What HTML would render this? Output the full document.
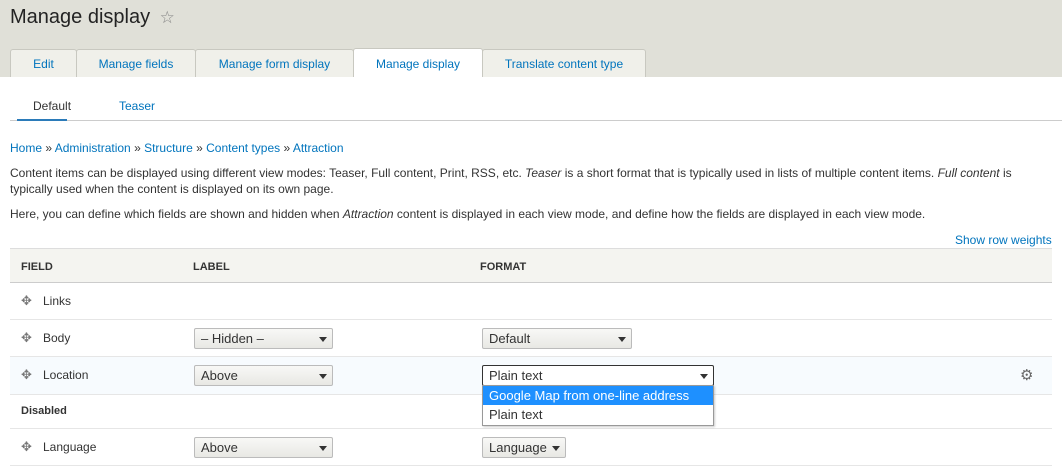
<!DOCTYPE html>
<html><head><style>
*{box-sizing:border-box;margin:0;padding:0}
body{width:1062px;height:475px;overflow:hidden;background:#fff;font-family:"Liberation Sans",sans-serif;font-size:12px;color:#333;position:relative}
a{color:#0074bd;text-decoration:none}
.hdr{position:absolute;left:0;top:0;width:1062px;height:77px;background:#e0e0d8}
.title{position:absolute;left:10px;top:6px;font-size:20px;color:#232323}
.star{color:#888;font-size:17px;margin-left:4px}
.tab{position:absolute;top:49px;height:28px;border:1px solid #c8c8c0;border-bottom:none;background:#f0f0ea;color:#0074bd;font-size:12px;line-height:28px;text-align:center;border-radius:3px 3px 0 0}
.tab.act{background:#fff;height:29px;top:48px;line-height:30px}
.sub{position:absolute;top:99px;font-size:12px;color:#0074bd}
.line{position:absolute;left:10px;width:1052px;top:120px;height:1px;background:#ccc}
.ul{position:absolute;left:17px;width:50px;top:119px;height:2px;background:#2b7bb9}
.t{position:absolute;left:10px;font-size:12px;white-space:nowrap}
.row{position:absolute;left:10px;width:1042px;border-bottom:1px solid #e6e6e6}
.th{background:#f4f4f0;border-top:1px solid #ddd;border-bottom:1px solid #ccc;font-weight:bold;font-size:11px}
.cell{position:absolute;white-space:nowrap}
.drag{position:absolute;left:11px;color:#777;font-size:13px}
.sel{position:absolute;height:21px;border:1px solid #bbb;border-radius:2px;background:linear-gradient(#f8f8f6,#e8e8e4);font-size:13px;line-height:19px;padding-left:6px}
.sel:after{content:"";position:absolute;right:5px;top:8px;border-left:4px solid transparent;border-right:4px solid transparent;border-top:5px solid #333}
</style></head><body>
<div class="hdr">
<div class="title">Manage display <span class="star">☆</span></div>
<div class="tab" style="left:10px;width:67px">Edit</div>
<div class="tab" style="left:76px;width:120px">Manage fields</div>
<div class="tab" style="left:195px;width:159px">Manage form display</div>
<div class="tab act" style="left:353px;width:130px">Manage display</div>
<div class="tab" style="left:482px;width:164px">Translate content type</div>
</div>
<div class="sub" style="left:33px;color:#333">Default</div>
<div class="sub" style="left:119px">Teaser</div>
<div class="line"></div><div class="ul"></div>
<div class="t" style="top:141px"><a>Home</a> » <a>Administration</a> » <a>Structure</a> » <a>Content types</a> » <a>Attraction</a></div>
<div class="t" style="top:165px;line-height:16px;white-space:normal;width:1045px">Content items can be displayed using different view modes: Teaser, Full content, Print, RSS, etc. <i>Teaser</i> is a short format that is typically used in lists of multiple content items. <i>Full content</i> is typically used when the content is displayed on its own page.</div>
<div class="t" style="top:207px">Here, you can define which fields are shown and hidden when <i>Attraction</i> content is displayed in each view mode, and define how the fields are displayed in each view mode.</div>
<div class="t" style="top:233px;left:955px;color:#0074bd">Show row weights</div>
<div class="row th" style="top:248px;height:35px"><span class="cell" style="left:11px;top:12px">FIELD</span><span class="cell" style="left:183px;top:12px">LABEL</span><span class="cell" style="left:470px;top:12px">FORMAT</span></div>
<div class="row" style="top:283px;height:37px"><span class="drag" style="top:10px">✥</span><span class="cell" style="left:33px;top:11px">Links</span></div>
<div class="row" style="top:320px;height:37px"><span class="drag" style="top:10px">✥</span><span class="cell" style="left:33px;top:11px">Body</span>
<div class="sel" style="left:184px;top:8px;width:139px">– Hidden –</div><div class="sel" style="left:472px;top:8px;width:150px">Default</div></div>
<div class="row" style="top:357px;height:38px;background:#f7fbfe"><span class="drag" style="top:10px">✥</span><span class="cell" style="left:33px;top:11px">Location</span>
<div class="sel" style="left:184px;top:8px;width:139px">Above</div>
<span class="cell" style="left:1010px;top:9px;color:#666;font-size:15px">⚙</span></div>
<div class="row" style="top:395px;height:34px"><span class="cell" style="left:11px;top:10px;font-weight:bold;font-size:11px">Disabled</span></div>
<div class="row" style="top:429px;height:37px"><span class="drag" style="top:10px">✥</span><span class="cell" style="left:33px;top:11px">Language</span>
<div class="sel" style="left:184px;top:8px;width:139px">Above</div><div class="sel" style="left:472px;top:8px;width:84px">Language</div></div>
<div class="sel" style="left:482px;top:365px;width:232px;border:1px solid #333;background:#fff">Plain text</div>
<div style="position:absolute;left:482px;top:385px;width:232px;height:41px;border:1px solid #999;background:#fff;font-size:13px;box-shadow:1px 1px 2px rgba(0,0,0,.2)">
<div style="background:#1e90ff;color:#fff;height:19px;line-height:19px;padding-left:6px">Google Map from one-line address</div>
<div style="height:20px;line-height:20px;padding-left:6px">Plain text</div></div>
</body></html>
